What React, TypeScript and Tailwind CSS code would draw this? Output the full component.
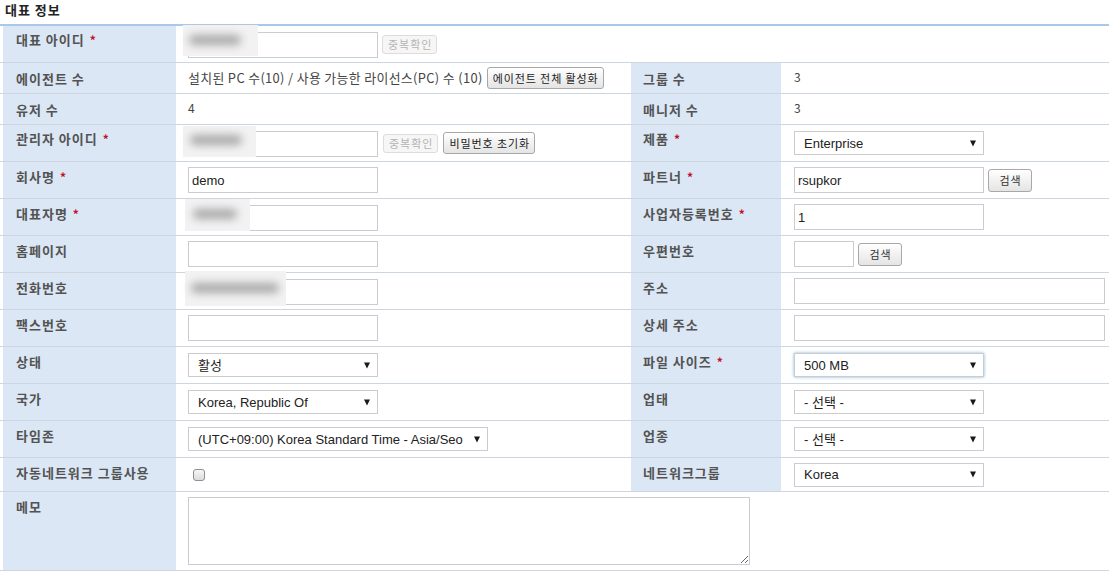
import React from "react";

const KR = "font-['Noto_Sans_CJK_KR',sans-serif]";
const AR = "font-['Liberation_Sans','Noto_Sans_CJK_KR',sans-serif]";

function Req() {
  return <span className="text-[#c0102a] ml-[5px] text-[12px] font-bold">*</span>;
}

function LL({ children, pt, req }: { children: React.ReactNode; pt: string; req?: boolean }) {
  return (
    <div className={`w-[173px] ml-[3px] shrink-0 bg-[#dbe7f4] pl-[13px] text-[13px] font-bold leading-[16px] tracking-[1px] text-[#535353] ${pt}`}>
      {children}
      {req && <Req />}
    </div>
  );
}

function RL({ children, pt, req }: { children: React.ReactNode; pt: string; req?: boolean }) {
  return (
    <div className={`w-[150px] shrink-0 bg-[#dbe7f4] pl-[12px] text-[13px] font-bold leading-[16px] tracking-[1px] text-[#535353] ${pt}`}>
      {children}
      {req && <Req />}
    </div>
  );
}

function LV({ children }: { children?: React.ReactNode }) {
  return <div className="w-[455px] shrink-0 pl-[12px] flex items-center">{children}</div>;
}

function RV({ children }: { children?: React.ReactNode }) {
  return <div className="flex-1 pl-[13px] flex items-center">{children}</div>;
}

function Row({ h, children }: { h: string; children: React.ReactNode }) {
  return <div className={`flex border-b border-[#cdd5de] ${h}`}>{children}</div>;
}

function Inp({ w, value }: { w: string; value?: string }) {
  return (
    <input
      readOnly
      value={value ?? ""}
      className={`${w} h-[26px] border border-[#cccccc] bg-white px-[3px] text-[13px] text-[#222] outline-none ${AR}`}
    />
  );
}

function Btn({ children, disabled, cls = "" }: { children: React.ReactNode; disabled?: boolean; cls?: string }) {
  return disabled ? (
    <button className={`h-[19px] pl-[5px] pr-[4px] border border-[#dddddd] rounded-[3px] bg-[#f6f6f6] text-[11px] leading-none tracking-[1px] text-[#b4b4b4] ${KR} ${cls}`}>
      {children}
    </button>
  ) : (
    <button className={`h-[22px] pl-[5px] pr-[4px] border border-[#a8a8a8] rounded-[3px] bg-linear-to-b from-white to-[#e4e4e4] text-[11px] leading-none tracking-[0.9px] text-[#222] ${KR} ${cls}`}>
      {children}
    </button>
  );
}

function Sel({ w, text, cls = "" }: { w: string; text: string; cls?: string }) {
  return (
    <div className={`${w} h-[24px] border border-[#cccccc] bg-white flex items-center pl-[9px] pr-[7px] ${cls}`}>
      <span className={`flex-1 whitespace-nowrap text-[13px] text-[#222] leading-none ${AR}`}>{text}</span>
      <svg width="6" height="7" viewBox="0 0 6 7" className="shrink-0 ml-[6px]">
        <path d="M0 0.5h6L3 6.5z" fill="#1a1a1a" />
      </svg>
    </div>
  );
}

function Blurred({ w, value, box, blob }: { w: string; value?: string; box: string; blob: string }) {
  return (
    <div className="relative">
      <Inp w={w} value={value} />
      <div className={`absolute bg-[#f2f2f2] ${box}`}>
        <div className={`absolute bg-[#a8a8a8] rounded-full blur-[4px] ${blob}`} />
      </div>
    </div>
  );
}

export default function App() {
  return (
    <div className={`w-[1109px] h-[576px] bg-white overflow-hidden ${KR}`}>
      <div className="h-[24px] pl-[5px] pt-[2px] text-[13px] font-bold leading-[16px] tracking-[1px] text-[#222]">대표 정보</div>
      <div className="border-t-2 border-[#abc8e6]">
        {/* 1 */}
        <Row h="h-[37px]">
          <LL pt="pt-[6px]" req>대표 아이디</LL>
          <LV>
            <Blurred w="w-[190px]" box="left-[-5px] top-[-5px] w-[75px] h-[31px]" blob="left-[6px] top-[10px] w-[52px] h-[10px]" />
            <Btn disabled cls="ml-[4px]">중복확인</Btn>
          </LV>
          <div className="flex-1" />
        </Row>
        {/* 2 */}
        <Row h="h-[31px]">
          <LL pt="pt-[8px]">에이전트 수</LL>
          <LV>
            <span className="text-[12.9px] tracking-[0.35px] text-[#444] leading-none">설치된 PC 수(10) / 사용 가능한 라이선스(PC) 수 (10)</span>
            <Btn cls="ml-[4px]">에이전트 전체 활성화</Btn>
          </LV>
          <RL pt="pt-[8px]">그룹 수</RL>
          <RV>
            <span className="text-[12px] text-[#444] -mt-[3px]">3</span>
          </RV>
        </Row>
        {/* 3 */}
        <Row h="h-[31px]">
          <LL pt="pt-[8px]">유저 수</LL>
          <LV>
            <span className="text-[12px] text-[#444] -mt-[3px]">4</span>
          </LV>
          <RL pt="pt-[8px]">매니저 수</RL>
          <RV>
            <span className="text-[12px] text-[#444] -mt-[3px]">3</span>
          </RV>
        </Row>
        {/* 4 */}
        <Row h="h-[37px]">
          <LL pt="pt-[6px]" req>관리자 아이디</LL>
          <LV>
            <Blurred w="w-[190px]" box="left-[-5px] top-[-3px] w-[73px] h-[31px]" blob="left-[7px] top-[9px] w-[52px] h-[10px]" />
            <Btn disabled cls="ml-[5px]">중복확인</Btn>
            <Btn cls="ml-[5px]">비밀번호 초기화</Btn>
          </LV>
          <RL pt="pt-[6px]" req>제품</RL>
          <RV>
            <Sel w="w-[190px]" text="Enterprise" />
          </RV>
        </Row>
        {/* 5 */}
        <Row h="h-[37px]">
          <LL pt="pt-[7px]" req>회사명</LL>
          <LV>
            <Inp w="w-[190px]" value="demo" />
          </LV>
          <RL pt="pt-[7px]" req>파트너</RL>
          <RV>
            <Inp w="w-[190px]" value="rsupkor" />
            <Btn cls="ml-[4px] w-[44px] h-[23px] text-[#333] text-[11.5px]">검색</Btn>
          </RV>
        </Row>
        {/* 6 */}
        <Row h="h-[37px]">
          <LL pt="pt-[7px]" req>대표자명</LL>
          <LV>
            <Blurred w="w-[190px]" box="left-[-3px] top-[-4px] w-[65px] h-[32px]" blob="left-[8px] top-[10px] w-[44px] h-[10px]" />
          </LV>
          <RL pt="pt-[7px]" req>사업자등록번호</RL>
          <RV>
            <Inp w="w-[190px]" value="1" />
          </RV>
        </Row>
        {/* 7 */}
        <Row h="h-[37px]">
          <LL pt="pt-[7px]">홈페이지</LL>
          <LV>
            <Inp w="w-[190px]" />
          </LV>
          <RL pt="pt-[7px]">우편번호</RL>
          <RV>
            <Inp w="w-[60px]" />
            <Btn cls="ml-[4px] w-[44px] h-[23px] text-[#333] text-[11.5px]">검색</Btn>
          </RV>
        </Row>
        {/* 8 */}
        <Row h="h-[37px]">
          <LL pt="pt-[7px]">전화번호</LL>
          <LV>
            <Blurred w="w-[190px]" box="left-[-3px] top-[-6px] w-[101px] h-[35px]" blob="left-[6px] top-[12px] w-[88px] h-[10px]" />
          </LV>
          <RL pt="pt-[7px]">주소</RL>
          <RV>
            <Inp w="w-[311px]" />
          </RV>
        </Row>
        {/* 9 */}
        <Row h="h-[37px]">
          <LL pt="pt-[7px]">팩스번호</LL>
          <LV>
            <Inp w="w-[190px]" />
          </LV>
          <RL pt="pt-[7px]">상세 주소</RL>
          <RV>
            <Inp w="w-[311px]" />
          </RV>
        </Row>
        {/* 10 */}
        <Row h="h-[37px]">
          <LL pt="pt-[7px]">상태</LL>
          <LV>
            <Sel w="w-[190px]" text="활성" />
          </LV>
          <RL pt="pt-[7px]" req>파일 사이즈</RL>
          <RV>
            <Sel w="w-[190px]" text="500 MB" cls="border-[#6aa3dc] shadow-[0_0_3px_#7fb2e5]" />
          </RV>
        </Row>
        {/* 11 */}
        <Row h="h-[37px]">
          <LL pt="pt-[7px]">국가</LL>
          <LV>
            <Sel w="w-[190px]" text="Korea, Republic Of" />
          </LV>
          <RL pt="pt-[7px]">업태</RL>
          <RV>
            <Sel w="w-[190px]" text="- 선택 -" />
          </RV>
        </Row>
        {/* 12 */}
        <Row h="h-[37px]">
          <LL pt="pt-[7px]">타임존</LL>
          <LV>
            <Sel w="w-[300px]" text="(UTC+09:00) Korea Standard Time - Asia/Seo" />
          </LV>
          <RL pt="pt-[7px]">업종</RL>
          <RV>
            <Sel w="w-[190px]" text="- 선택 -" />
          </RV>
        </Row>
        {/* 13 */}
        <Row h="h-[34px]">
          <LL pt="pt-[7px]">자동네트워크 그룹사용</LL>
          <LV>
            <div className="w-[12px] h-[12px] ml-[5px] border border-[#8f8f8f] rounded-[3px] bg-linear-to-b from-[#f7f7f7] to-[#dcdcdc]" />
          </LV>
          <RL pt="pt-[7px]">네트워크그룹</RL>
          <RV>
            <Sel w="w-[190px]" text="Korea" />
          </RV>
        </Row>
        {/* 14 */}
        <Row h="h-[79px]">
          <LL pt="pt-[7px]">메모</LL>
          <div className="flex-1 pl-[12px] pt-[5px]">
            <textarea readOnly className="block w-[562px] h-[68px] border border-[#cccccc] bg-white outline-none" />
          </div>
        </Row>
      </div>
    </div>
  );
}
